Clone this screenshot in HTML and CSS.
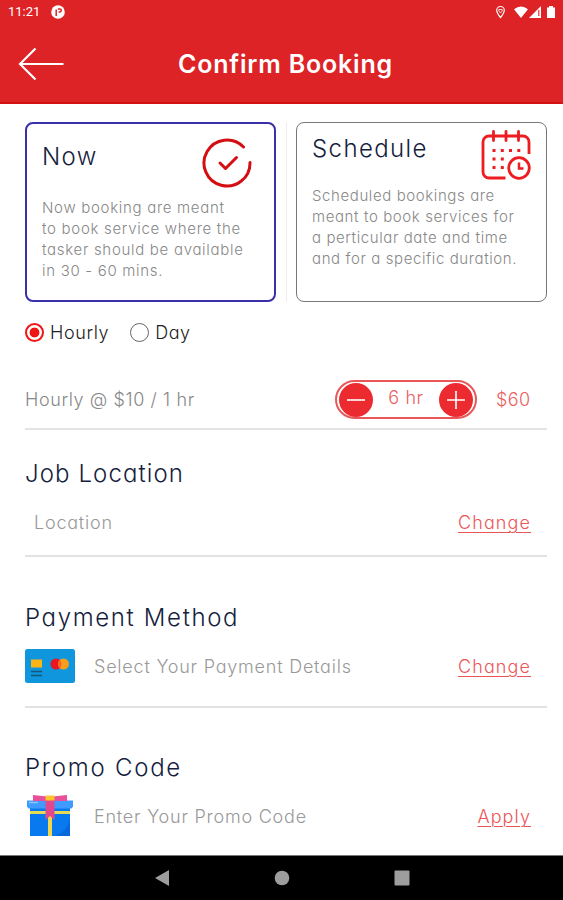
FILE: index.html
```
<!DOCTYPE html>
<html lang="en">
<head>
<meta charset="UTF-8" />
<title>Confirm Booking</title>
<link rel="stylesheet" href="styles.css">
</head>
<body>

<header class="header">
  <div class="status">
    <span class="time">11:21</span>
    <svg class="app-icon" width="14" height="14" viewBox="0 0 14 14">
      <circle cx="7" cy="7" r="6.8" fill="#fff"/>
      <path d="M5.2 11V4.5M6.8 4h2a1.5 1.5 0 0 1 0 3H7.5" fill="none" stroke="#de2326" stroke-width="1.5"/>
    </svg>
    <svg class="status-icons" width="62" height="14" viewBox="0 0 62 14">
      <path d="M5.5 12.5C3 9.5 1.7 7.5 1.7 5.3a3.8 3.8 0 0 1 7.6 0c0 2.2-1.3 4.2-3.8 7.2z" fill="none" stroke="#fff" stroke-width="1.2"/>
      <path d="M3.8 4.5h3.4v1.5L5.5 8 3.8 6z" fill="none" stroke="#fff" stroke-width=".8"/>
      <path d="M19 4.2Q26 -1 33 4.2L26 13z" fill="#fff"/>
      <path d="M34 13L46 1v12z" fill="#fff"/>
      <path d="M43.8 5v6" stroke="#de2326" stroke-width="1.1"/>
      <path d="M52 2.5h2V1h4v1.5h2V13h-8z" fill="#fff"/>
    </svg>
  </div>
  <div class="title-bar">
    <svg class="back" width="46" height="34" viewBox="0 0 46 34" fill="none" stroke="#fff" stroke-width="2.2">
      <path d="M45.5 17H2M17.5 1.5L2 17l15.5 15.5"/>
    </svg>
    <h1>Confirm Booking</h1>
  </div>
</header>

<main class="content">
  <section class="cards">
    <div class="card card-now active">
      <h2>Now</h2>
      <svg class="card-icon" width="50" height="50" viewBox="0 0 50 50" fill="none" stroke="#d40f14" stroke-width="3" stroke-linecap="round" stroke-linejoin="round">
        <path d="M48 24.5A23 23 0 1 1 41.5 9"/>
        <path d="M18 25l5.5 5.5L34.5 19.5"/>
      </svg>
      <p>Now booking are meant<br>to book service where the<br>tasker should be available<br>in 30 - 60 mins.</p>
    </div>
    <div class="card card-schedule">
      <h2>Schedule</h2>
      <svg class="card-icon" width="50" height="50" viewBox="0 0 50 50" fill="none" stroke="#ec1c20" stroke-width="2.8">
        <path d="M24.5 48H8a6 6 0 0 1-6-6V12a6 6 0 0 1 6-6h34a6 6 0 0 1 6 6v12"/>
        <path d="M12.5 1.5v9M25 1.5v9M37.5 1.5v9" stroke-linecap="round"/>
        <path d="M11.5 20.5h3M19.8 20.5h3M28 20.5h3M36.3 20.5h3M11.5 29h3M19.8 29h3M11.5 37.5h3M19.8 37.5h3" stroke-width="3"/>
        <circle cx="38" cy="38" r="10.3"/>
        <path d="M38 32.5v6h4.5" stroke-width="2.5"/>
      </svg>
      <p>Scheduled bookings are<br>meant to book services for<br>a perticular date and time<br>and for a specific duration.</p>
    </div>
  </section>

  <div class="units">
    <label class="unit"><span class="radio checked"></span><span class="hourly">Hourly</span></label>
    <label class="unit"><span class="radio"></span><span class="day">Day</span></label>
  </div>

  <div class="rate">
    <span class="rate-label">Hourly @ $10 / 1 hr</span>
    <div class="stepper">
      <svg width="34" height="34" viewBox="0 0 34 34"><circle cx="17" cy="17" r="17" fill="#eb2b2f"/><path d="M8 17h18" stroke="#fff" stroke-width="1.6"/></svg>
      <span class="hours">6 hr</span>
      <svg width="34" height="34" viewBox="0 0 34 34"><circle cx="17" cy="17" r="17" fill="#eb2b2f"/><path d="M8 17h18M17 8v18" stroke="#fff" stroke-width="1.6"/></svg>
    </div>
    <span class="price">$60</span>
  </div>

  <section class="block location">
    <h2>Job Location</h2>
    <div class="row">
      <span class="placeholder">Location</span>
      <a class="link">Change</a>
    </div>
  </section>

  <section class="block payment">
    <h2>Payment Method</h2>
    <div class="row">
      <svg class="row-icon" width="50" height="34" viewBox="0 0 50 34">
        <rect width="50" height="34" rx="2.5" fill="#0f96dc"/>
        <rect x="6" y="10.5" width="11" height="8" fill="#fdb515"/>
        <path d="M6 22.5h11M6 26.5h11" stroke="#175579" stroke-width="1.5"/>
        <circle cx="31" cy="15" r="5.5" fill="#ea1620"/>
        <circle cx="38.5" cy="15" r="5.5" fill="#fa9c1c"/>
        <path d="M34.75 11a5.5 5.5 0 0 1 0 8a5.5 5.5 0 0 1 0-8z" fill="#f9661f"/>
      </svg>
      <span class="placeholder">Select Your Payment Details</span>
      <a class="link">Change</a>
    </div>
  </section>

  <section class="block promo">
    <h2>Promo Code</h2>
    <div class="row">
      <svg class="row-icon" width="50" height="44" viewBox="0 0 50 44">
        <path d="M5 12h40v29H5z" fill="#0879ee"/>
        <path d="M45 24v17H30q12-4 15-17z" fill="#0768dc"/>
        <path d="M2 5.5h46v6l-1.5 2h-43l-1.5-2z" fill="#3f9bff"/>
        <path d="M4 7.5h9" stroke="#8bc4ff" stroke-width="1.5"/>
        <path d="M5 17.5h40" stroke="#e4dc58" stroke-width="3"/>
        <path d="M25 21v20" stroke="#f2d64b" stroke-width="4"/>
        <path d="M8 0L22 1.500v4.500H8zM42 0L28 1.500v4.500h14z" fill="#e9509a"/>
        <path d="M20.5 4h9v21L25 21l-4.5 4z" fill="#e3488d"/>
        <path d="M20.5 .5h9v5h-9z" fill="#fcc52b"/>
      </svg>
      <span class="placeholder">Enter Your Promo Code</span>
      <a class="link">Apply</a>
    </div>
  </section>
</main>

<nav class="navbar">
  <svg width="16" height="16" viewBox="0 0 16 16"><path d="M15 0v16L1 8z" fill="#9d9d9d"/></svg>
  <svg width="16" height="16" viewBox="0 0 16 16"><circle cx="8" cy="8" r="7.3" fill="#9d9d9d"/></svg>
  <svg width="16" height="16" viewBox="0 0 16 16"><rect x=".5" y=".5" width="15" height="15" rx="1" fill="#9d9d9d"/></svg>
</nav>

</body>
</html>
```
FILE: styles.css
```
* { box-sizing: border-box; }

body {
  margin: 0;
  height: 900px;
  display: flex;
  flex-direction: column;
  overflow: hidden;
  background: #fff;
  color: #888;
  font-family: Inter, "Open Sans", sans-serif;
  font-weight: 300;
  font-feature-settings: "cv11"; /* single-storey a */
  letter-spacing: .6px;
}

h1, h2, p { margin: 0; }
svg { display: block; flex: none; }
span, a, h1, h2, p { white-space: nowrap; }

/* header */
.header {
  height: 104px;
  background: #de2326;
  border-bottom: 2px solid #d41214;
  color: #fff;
}
.status {
  display: flex;
  align-items: center;
  height: 24px;
  padding: 0 6px 0 8px;
}
.time { width: 43px; font: 400 13px/24px Roboto, sans-serif; letter-spacing: 0; }
.status-icons { margin-left: auto; }
.title-bar {
  display: grid;
  grid-template-columns: 46px 1fr 38px;
  align-items: center;
  height: 80px;
  padding: 0 18px;
}
.title-bar h1 {
  text-align: center;
  font-size: 25px;
  font-weight: 600;
  letter-spacing: .8px;
}

/* booking type */
.content { flex: 1; padding: 18px 16px 0 25px; }
.cards {
  display: grid;
  grid-template-columns: 1fr 1fr;
  gap: 20px;
  background: linear-gradient(#eee, #eee) center / 1px 100% no-repeat;
}
.card {
  display: grid;
  grid-template-columns: 1fr 50px;
  height: 180px;
  border: 1px solid #777;
  border-radius: 8px;
  background: #fff;
}
.card.active { border: 2px solid #3a30a8; }
.card h2 { line-height: 32px; }
.card p { grid-column: 1 / 3; font-size: 15px; line-height: 21px; }
.card-now { grid-template-rows: 59px auto; padding: 14px 22px 0 15px; }
.card-now h2 { padding-top: 3px; }
.card-now p { letter-spacing: .7px; }
.card-schedule { grid-template-rows: 55px auto; padding: 7px 15px 0; }
.card-schedule h2 { padding-top: 3px; }

h2 {
  color: #14213d;
  font-size: 24px;
  font-weight: 300;
  line-height: 36px;
  letter-spacing: 1.4px;
}

/* hourly / day */
.units {
  display: flex;
  gap: 21px;
  height: 61px;
  align-items: center;
  color: #222;
  font-size: 18px;
}
.unit { display: flex; align-items: center; gap: 6px; }
.radio {
  width: 19px;
  height: 19px;
  border: 1.5px solid #666;
  border-radius: 50%;
}
.radio.checked {
  border: 2px solid #ee1515;
  background: radial-gradient(circle, #ee1515 4.5px, #fff 5.3px);
}

/* price line */
.rate {
  display: flex;
  align-items: center;
  height: 67px;
  padding: 8px 16px 0 0;
  border-bottom: 2px solid #e2e4e6;
  font-size: 18px;
}
.stepper {
  display: flex;
  align-items: center;
  justify-content: space-between;
  width: 142px;
  height: 39px;
  margin: 0 19px 0 auto;
  padding: 0 2px;
  border: 2px solid #e8575a;
  border-radius: 20px;
}
.hours, .price { color: #ec5d60; }
.hours { padding-bottom: 4px; }
.price { width: 35px; letter-spacing: .4px; }

/* form blocks */
.block { border-bottom: 2px solid #e2e2e2; }
.row {
  display: flex;
  align-items: center;
  padding-right: 16px;
  font-size: 18px;
}
.row-icon { margin-right: 19px; }
.placeholder { color: #999; letter-spacing: .78px; }
.link {
  margin-left: auto;
  color: #ec5558;
  letter-spacing: 1.1px;
  text-decoration: underline;
  text-decoration-thickness: 1px;
  text-underline-offset: 3px;
}
.location { height: 127px; padding-top: 26px; }
.location h2 { letter-spacing: 1.1px; }
.location .row { height: 61px; padding-left: 9px; }
.payment { height: 151px; padding-top: 43px; }
.payment h2 { letter-spacing: 1.65px; }
.payment .row { height: 60px; }
.promo { padding-top: 42px; border: 0; }
.promo h2 { letter-spacing: 1.75px; }
.promo .row { height: 61px; }

/* system navigation */
.navbar {
  display: flex;
  justify-content: center;
  gap: 104px;
  height: 45px;
  padding-top: 14px;
  background: #000;
  border-top: 1px solid #777;
}
```
